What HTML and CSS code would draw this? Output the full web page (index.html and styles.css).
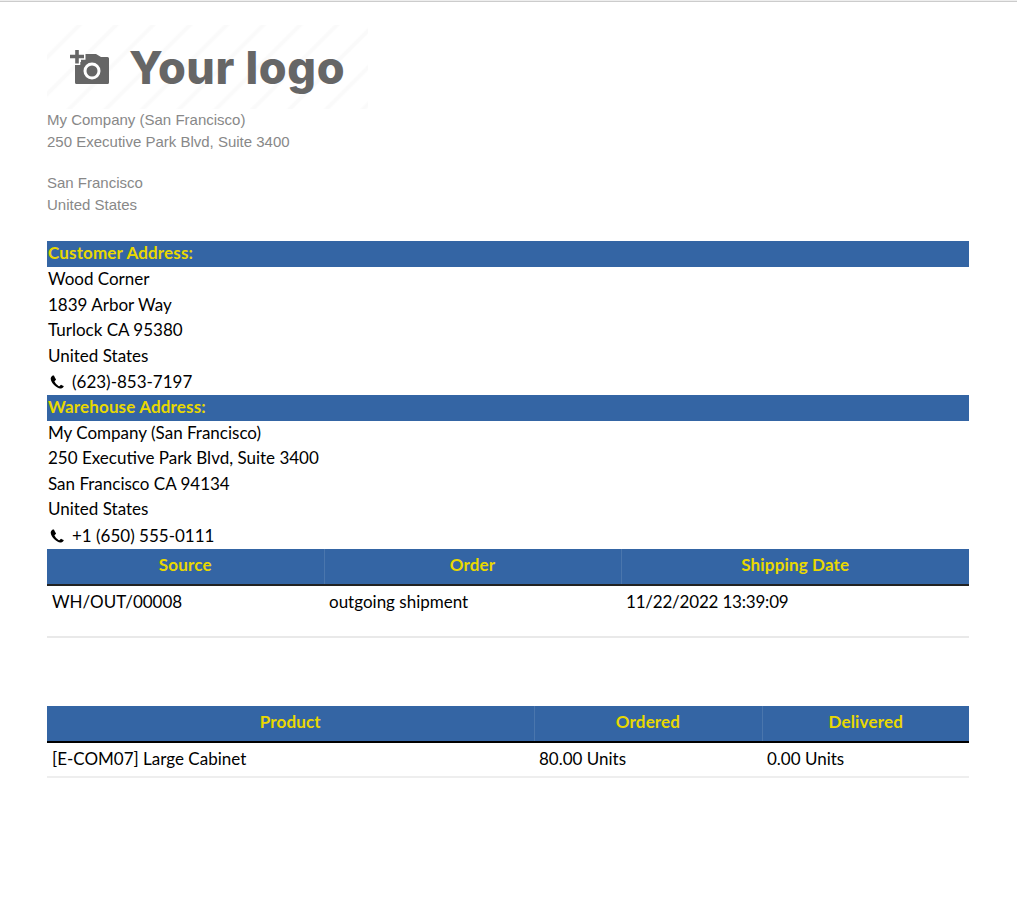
FILE: index.html
```html
<!DOCTYPE html>
<html lang="en">
<head>
<meta charset="utf-8">
<title>Picking</title>
<link rel="stylesheet" href="styles.css">
</head>
<body>
<div class="topline"></div>
<main class="page">
  <header class="company">
    <div class="logo">
      <svg class="logo-icon" viewBox="0 0 40 36" width="40" height="36" aria-hidden="true">
        <path fill="#666" fill-rule="evenodd" d="M11 5H26L31 8H37.500A1.500 1.500 0 0 1 39 9.500V33.500A1.500 1.500 0 0 1 37.500 35H6.500A1.500 1.500 0 0 1 5 33.500V13H11ZM22 13.500A8.500 8.500 0 1 0 22 30.500 8.500 8.500 0 0 0 22 13.500ZM22 16.500A5.500 5.500 0 1 1 22 27.500 5.500 5.500 0 0 1 22 16.500Z"/>
        <path class="plus" d="M5.200 1H8.800V5.700H14V9.300H8.800V14.500H5.200V9.300H0V5.700H5.200Z"/>
      </svg>
      <span class="logo-text">Your logo</span>
    </div>
    <div class="company-address">
      <div>My Company (San Francisco)</div>
      <div>250 Executive Park Blvd, Suite 3400</div>
      <div class="spaced">San Francisco</div>
      <div>United States</div>
    </div>
  </header>

  <section class="address">
    <h2 class="band">Customer Address:</h2>
    <div class="line">Wood Corner</div>
    <div class="line">1839 Arbor Way</div>
    <div class="line">Turlock CA 95380</div>
    <div class="line">United States</div>
    <div class="phone">
      <svg class="phone-icon" viewBox="0 0 16 16" width="14" height="14" aria-hidden="true"><path fill="#000" d="M15.500 12.300c0 .4-.1.900-.2 1.300-.2.500-1.200 1.200-1.800 1.500-.5.300-1.100.4-1.700.4-2 0-4.600-1.500-6.800-3.700C2.700 9.500.8 6.400.8 4.300c0-.6.200-1.200.4-1.700.3-.6 1-1.600 1.500-1.800.4-.1.900-.2 1.300-.2h.3c.2.100.5.700.7 1 .5.900.9 1.800 1.400 2.600.2.300.5.600.5.900 0 .6-1.800 1.500-1.800 2.100 0 .3.300.7.400.9 1.100 1.900 2.400 3.300 4.200 4.400.3.200.7.400.9.400.6 0 1.500-1.800 2.100-1.800.3 0 .6.300.9.500.8.500 1.700.9 2.600 1.400.3.200.9.500 1 .7 0 .1 0 .2-.2.500z"/></svg>
      <span>(623)-853-7197</span>
    </div>
  </section>

  <section class="address">
    <h2 class="band">Warehouse Address:</h2>
    <div class="line">My Company (San Francisco)</div>
    <div class="line">250 Executive Park Blvd, Suite 3400</div>
    <div class="line">San Francisco CA 94134</div>
    <div class="line">United States</div>
    <div class="phone">
      <svg class="phone-icon" viewBox="0 0 16 16" width="14" height="14" aria-hidden="true"><path fill="#000" d="M15.500 12.300c0 .4-.1.900-.2 1.300-.2.500-1.200 1.200-1.800 1.500-.5.300-1.100.4-1.700.4-2 0-4.600-1.500-6.800-3.700C2.700 9.500.8 6.400.8 4.300c0-.6.200-1.200.4-1.700.3-.6 1-1.600 1.500-1.800.4-.1.900-.2 1.300-.2h.3c.2.100.5.700.7 1 .5.900.9 1.800 1.400 2.600.2.300.5.600.5.900 0 .6-1.800 1.500-1.800 2.100 0 .3.300.7.400.9 1.100 1.900 2.400 3.300 4.200 4.400.3.200.7.400.9.400.6 0 1.500-1.800 2.100-1.800.3 0 .6.300.9.500.8.500 1.700.9 2.600 1.400.3.200.9.500 1 .7 0 .1 0 .2-.2.500z"/></svg>
      <span>+1 (650) 555-0111</span>
    </div>
  </section>

  <table class="grid info">
    <colgroup><col class="i1"><col class="i2"><col class="i3"></colgroup>
    <thead><tr><th>Source</th><th>Order</th><th>Shipping Date</th></tr></thead>
    <tbody><tr><td>WH/OUT/00008</td><td>outgoing shipment</td><td class="date">11/22/2022 13:39:09</td></tr></tbody>
  </table>

  <table class="grid products">
    <colgroup><col class="p1"><col class="p2"><col class="p3"></colgroup>
    <thead><tr><th>Product</th><th>Ordered</th><th>Delivered</th></tr></thead>
    <tbody><tr><td>[E-COM07] Large Cabinet</td><td>80.00 Units</td><td>0.00 Units</td></tr></tbody>
  </table>
</main>
</body>
</html>
```

FILE: styles.css
```css
* { box-sizing: border-box; }
html, body { margin: 0; padding: 0; background: #fff; }
body { font-family: "Lato", sans-serif; font-size: 17px; line-height: 25.6px; color: #000; }
.topline { height: 2px; background: #ccc; border-top: 1px solid #eee; }
.page { padding: 23px 48px 0 47px; }

.logo {
  width: 321px; height: 84px;
  display: flex; align-items: center;
  padding: 0 0 0 23px;
  background: repeating-linear-gradient(135deg, #fff 0, #fff 20px, #fafafa 22px, #fafafa 24px, #fff 26px);
}
.logo-icon { margin: 0 19px 0 0; flex: none; }
.plus { fill: #666; stroke: #fff; stroke-width: 3px; paint-order: stroke fill; }
.logo-text { font-family: "Inter", sans-serif; font-weight: 800; font-size: 45px; letter-spacing: .6px; line-height: 1; color: #666; }

.company-address {
  font-family: "Liberation Sans", Arial, sans-serif;
  font-size: 15px; line-height: 22px; color: #888;
}
.spaced { margin-top: 19px; }

.company { margin-bottom: 25.4px; }
.line { padding: 0 0 1.34px 1px; line-height: 24.26px; }
.band {
  margin: 0; padding: 0 0 1.34px 1px; font-size: 17px; font-weight: 700; line-height: 24.26px;
  letter-spacing: .15px;
  background: #3465a4; color: #e9d800;
}
.phone { display: flex; align-items: center; padding-left: 3px; }
.phone-icon { margin-right: 8px; flex: none; }

.grid { width: 922px; border-collapse: collapse; table-layout: fixed; }
.grid th {
  background: #3465a4; color: #e9d800; font-weight: 700; text-align: center;
  letter-spacing: .15px;
  padding: 3px 4px 0; height: 36px; vertical-align: top;
  border-bottom: 2px solid #222;
  border-left: 1px solid #4a76ad;
}
.grid th:first-child { border-left: 0; }
.grid td { padding: 3px 5px 0; vertical-align: top; }
.date { letter-spacing: -.2px; }

.info td { height: 52px; border-bottom: 2px solid #e9e9e9; }
.i1 { width: 277px; } .i2 { width: 297px; } .i3 { width: 348px; }

.products { margin-top: 68px; }
.products th { border-bottom-color: #000; }
.products td { height: 35px; border-bottom: 2px solid #eee; }
.p1 { width: 487px; } .p2 { width: 228px; } .p3 { width: 207px; }
```
